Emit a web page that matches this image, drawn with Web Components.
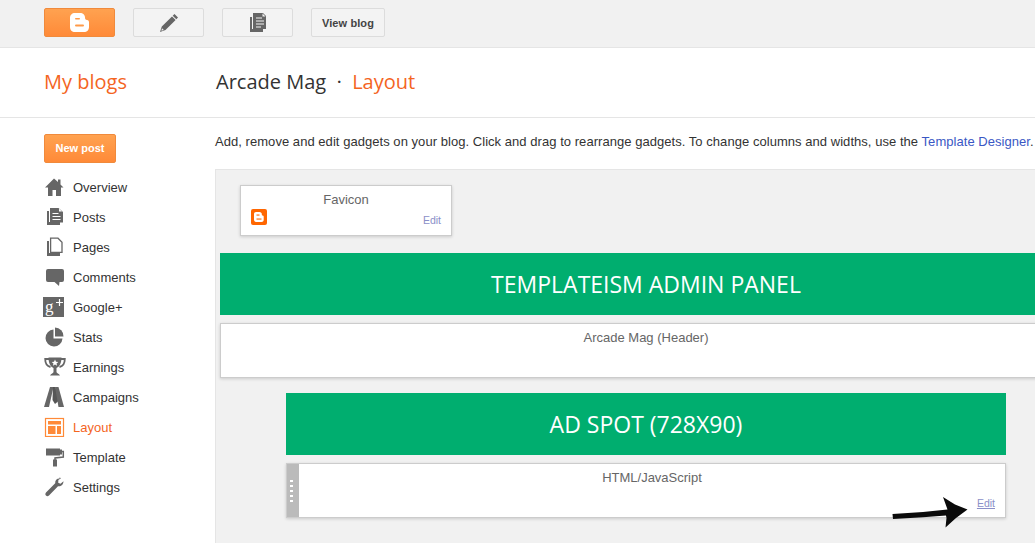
<!DOCTYPE html>
<html><head><meta charset="utf-8">
<style>
html,body{margin:0;padding:0;background:#fff}
body{width:1035px;height:543px;overflow:hidden;font-family:"Liberation Sans",Arial,sans-serif;color:#333}
</style></head>
<body>
<x-app></x-app>
<template id="t-app">
<style>
:host{display:block;width:1035px;height:543px;position:relative;overflow:hidden}
.body{display:flex}
main{flex:none;width:820px}
.hint{font-size:13px;line-height:15px;letter-spacing:.045px;color:#333;white-space:nowrap;padding-top:16px;height:20px;margin-bottom:15px}
.hint a{color:#3a57c4;text-decoration:none}
.panel{box-sizing:border-box;width:860px;height:400px;background:#f1f1f1;border:1px solid #e5e5e5;border-right:0;padding:15px 0 0 4px;overflow:hidden}
svg.arrow{position:absolute;left:890px;top:494px;width:80px;height:36px}
</style>
<x-topbar></x-topbar>
<x-pagehead></x-pagehead>
<div class="body">
<x-sidebar></x-sidebar>
<main>
<div class="hint">Add, remove and edit gadgets on your blog. Click and drag to rearrange gadgets. To change columns and widths, use the <a href="#">Template Designer</a>.</div>
<div class="panel">
<x-gadget title-text="Favicon" kind="favicon" style="margin-left:20px;width:212px;height:51px"></x-gadget>
<x-banner style="margin-top:17px;width:852px">TEMPLATEISM ADMIN PANEL</x-banner>
<x-gadget title-text="Arcade Mag (Header)" style="margin-top:8px;width:852px;height:55px"></x-gadget>
<x-banner style="margin-top:15px;margin-left:66px;width:720px">AD SPOT (728X90)</x-banner>
<x-gadget title-text="HTML/JavaScript" kind="drag" style="margin-top:8px;margin-left:66px;width:720px;height:55px"></x-gadget>
</div>
</main>
</div>
<svg class="arrow" viewBox="0 0 80 36"><path fill="#0a0a0a" d="M2.500 20 L3 25 L33 23.200 L56 21.500 L56.500 24 L55.500 33.500 L66 24 L77.500 15.500 L65 10.500 L53 3 L57.500 15.500 L33 18 Z"/></svg>
</template>

<template id="t-topbar">
<style>
:host{display:flex;box-sizing:border-box;height:48px;background:#f1f1f1;border-bottom:1px solid #e5e5e5;padding:8px 0 0 44px;gap:18px;align-items:flex-start}
.b{box-sizing:border-box;width:71px;height:29px;border:1px solid #dcdcdc;border-radius:2px;background:#f3f3f3;display:flex;align-items:center;justify-content:center}
.o{background:linear-gradient(#ffa250,#ff8a38);border-color:#f08a3c}
.v{width:74px;font:bold 11px "Liberation Sans",Arial,sans-serif;color:#444;letter-spacing:.1px}
</style>
<div class="b o"><svg width="19" height="19" viewBox="0 0 19 19"><path fill="#fff" d="M5 0h5c3 0 5 2 5 4.500 0 1.500.5 2.500 2 2.500 1.500 0 2 1 2 2.500V14c0 3-2 5-5 5H5c-3 0-5-2-5-5V5c0-3 2-5 5-5z"/><rect x="5" y="5" width="5" height="1.600" rx=".8" fill="#ff9a48"/><rect x="5" y="11.500" width="9" height="2" rx="1" fill="#ff9a48"/></svg></div>
<div class="b"><svg width="20" height="20" viewBox="0 0 20 20"><path fill="#666" d="M15.500 1 L19 4.500 L17.300 6.300 L13.700 2.800Z M13 3.500 L16.600 7 L6.500 17 L1 19 L2.800 13.500Z"/><path fill="#f3f3f3" d="M3 15.200l1.800 1.800-2.400.7z"/></svg></div>
<div class="b"><svg width="18" height="21" viewBox="0 0 18 21"><path fill="#666" d="M1 5h2v12h11v3H1z"/><path fill="#666" d="M4 1h10l3 3v13H4z"/><path stroke="#f3f3f3" stroke-width="1.200" d="M7 6h6M7 9h8M7 12h8M7 15h5"/><path fill="#f3f3f3" d="M13.500 1.500l3 3h-3z"/></svg></div>
<div class="b v">View blog</div>
</template>

<template id="t-pagehead">
<style>
:host{display:flex;box-sizing:border-box;height:70px;border-bottom:1px solid #e5e5e5;font:20px/68px "Open Sans",sans-serif;color:#333;white-space:nowrap}
.l{color:#f4651f;width:172px;margin-left:44px}
.o{color:#f4651f}
.d{margin:0 11px;font-weight:bold;font-size:14px}
</style>
<span class="l">My blogs</span><span>Arcade Mag</span><span class="d">·</span><span class="o">Layout</span>
</template>

<template id="t-sidebar">
<style>
:host{display:block;flex:none;width:215px;box-sizing:border-box;padding:16px 0 0 44px}
.np{box-sizing:border-box;width:72px;height:29px;background:linear-gradient(#ffa250,#ff8a38);border:1px solid #f08a3c;border-radius:2px;color:#fff;font:bold 11px/27px "Liberation Sans",Arial,sans-serif;text-align:center;margin-bottom:9px}
</style>
<div class="np">New post</div>
<x-navitem label="Overview"><svg viewBox="0 0 22 20" width="22" height="20"><path fill="#666" d="M10 1.500 L1 10.500 H4 V19 H8.500 V13 H12 V19 H17 V10.500 H19.500 L16.500 7.500 V2.500 H14 V5 Z"/></svg></x-navitem>
<x-navitem label="Posts"><svg viewBox="0 0 22 20" width="22" height="20"><path fill="#666" d="M3 4h2v11h11v3H3z"/><path fill="#666" d="M6 .5h8.500L19 4.500V15H6z" transform="translate(0 .5)"/><path stroke="#fff" stroke-width="1.200" d="M8.500 6.500h6M8.500 9.500h8M8.500 12.500h8"/><path fill="#fff" d="M15 1.500l3 3h-3z"/></svg></x-navitem>
<x-navitem label="Pages"><svg viewBox="0 0 22 20" width="22" height="20"><path fill="#666" d="M3 4h2v12h11v3H3z"/><path fill="#fff" stroke="#666" stroke-width="1.300" d="M6.600 1.200h7.400l4 4v10.200H6.600z"/></svg></x-navitem>
<x-navitem label="Comments"><svg viewBox="0 0 22 20" width="22" height="20"><path fill="#666" d="M4 2h14a2 2 0 0 1 2 2v9a2 2 0 0 1-2 2h-2.500l-.5 4-4.500-4H4a2 2 0 0 1-2-2V4a2 2 0 0 1 2-2z"/></svg></x-navitem>
<x-navitem label="Google+"><svg viewBox="0 0 22 22" width="22" height="22" style="margin:-1px 0 -1px -1px"><rect x="0" y="1" width="21" height="20" fill="#666"/><text x="2" y="15.500" font-family="Liberation Serif,serif" font-size="17" fill="#fff">g</text><path stroke="#fff" stroke-width="1.200" d="M13 6.500h7M16.500 3v7"/></svg></x-navitem>
<x-navitem label="Stats"><svg viewBox="0 0 22 20" width="22" height="20"><path fill="#666" d="M9.500 2.500a8.500 8.500 0 1 0 9 9h-9z"/><path fill="#666" d="M11 .5a8.500 8.500 0 0 1 8.500 9H11z"/></svg></x-navitem>
<x-navitem label="Earnings"><svg viewBox="0 0 22 22" width="22" height="22" style="margin:-1px 0"><path fill="none" stroke="#666" stroke-width="1.800" d="M5 3H1.200c0 4 1 7 5.300 8M17 3h3.800c0 4-1 7-5.300 8"/><path fill="#666" d="M4.500 1.500h13c0 5-1.500 9-5 10.500v4c0 1 2.500 1.500 3.500 3.500H6c1-2 3.500-2.500 3.500-3.500v-4C6 10.500 4.500 6.500 4.500 1.500z"/><path fill="#fff" d="M11 3.500l1 2.200 2.300.2-1.800 1.500.6 2.300-2.100-1.300-2.100 1.300.6-2.300L7.700 5.900 10 5.700z"/></svg></x-navitem>
<x-navitem label="Campaigns"><svg viewBox="0 0 22 22" width="22" height="22" style="margin:-1px 0 -1px -1px"><path fill="#666" d="M7 1h3.500L6 21H1z"/><path fill="#444" d="M10 1h2.500l3 14-3.500 3-2.500-4z" opacity=".9"/><path fill="#666" d="M12 1h3.500L21 21h-5.500z"/></svg></x-navitem>
<x-navitem label="Layout" active="1"><svg viewBox="0 0 22 20" width="22" height="20"><rect x="1.500" y="1.500" width="18" height="18" fill="#fff" stroke="#ff8a38" stroke-width="1.200"/><path fill="#ff8a38" d="M4 4h13v3.500H4zM4 9h7.500v8H4zM13 9h4v8h-4z"/></svg></x-navitem>
<x-navitem label="Template"><svg viewBox="0 0 22 20" width="22" height="20"><path fill="#666" d="M2 1.500h14v1h2v5h-2v1H2z"/><path fill="none" stroke="#666" stroke-width="1.500" d="M17.500 4.500h1.800v5.500l-8.300 1v2"/><rect x="9" y="12.500" width="4" height="7" fill="#666"/></svg></x-navitem>
<x-navitem label="Settings"><svg viewBox="0 0 22 20" width="22" height="20"><path fill="#666" d="M15.500 1.500c-2.800 0-4.500 2-4.300 4.800L2 15.500c-1 1.300-.7 2.300 0 3s1.700 1 3 0l9-9.300c2.800.5 5.500-1.500 5.500-5l-3 2.500-2.300-1 .2-2.700 2.600-1.700c-.5-.2-1-.8-1.500-.8z"/></svg></x-navitem>
</template>

<template id="t-navitem">
<style>
:host{display:flex;align-items:center;height:30px;font-size:13px;color:#333;white-space:nowrap}
:host([active]){color:#f4651f}
.i{width:29px;flex:none;display:flex;align-items:center;height:20px}
</style>
<span class="i"><slot></slot></span><span class="t"></span>
</template>

<template id="t-gadget">
<style>
:host{display:block;box-sizing:border-box;background:#fff;border:1px solid #ccc;box-shadow:0 1px 3px rgba(0,0,0,.16);position:relative;font-size:13px;color:#666}
.wrap{display:flex;height:100%}
.h{display:none;box-sizing:border-box;width:12px;padding-right:3px;flex:none;background:#bbb;flex-direction:column;align-items:center;justify-content:center;gap:3px}
.h i{display:block;width:3px;height:2px;background:#fff}
:host([kind=drag]) .h{display:flex}
.c{flex:1;min-width:0;display:flex;flex-direction:column;position:relative}
.t{text-align:center;line-height:14px;padding-top:7px}
.row{flex:1;display:flex;justify-content:space-between;align-items:flex-end;padding:0 10px 8px 10px;font-size:10.500px;line-height:12px}
a{color:#8b8fc8;text-decoration:none;display:none}
:host([kind=favicon]) a,:host([kind=drag]) a{display:block}
:host([kind=favicon]) a{margin-bottom:1px}
:host([kind=drag]) a{text-decoration:underline}
.f{display:none;margin-bottom:2px}
:host([kind=favicon]) .f{display:block}
.sp{flex:1}
</style>
<div class="wrap"><div class="h"><i></i><i></i><i></i><i></i><i></i></div>
<div class="c"><div class="t"></div><div class="row"><svg class="f" width="16" height="16" viewBox="0 0 16 16"><rect width="16" height="16" rx="2" fill="#f60"/><path fill="#fff" d="M5 3h3.500c1.500 0 2.300 1 2.300 2.200 0 .9.200 1.300 1 1.400.7.100.9.600.9 1.400V11c0 1.300-1 2-2.200 2H5c-1.200 0-2-1-2-2.200V5c0-1.200.8-2 2-2z"/><rect x="5.500" y="5.500" width="3" height="1.100" fill="#f60"/><rect x="5.500" y="9.500" width="5" height="1.100" fill="#f60"/></svg><span class="sp"></span><a href="#">Edit</a></div></div></div>
</template>

<template id="t-banner">
<style>
:host{display:block;height:62px;background:#00ae6f;color:#fff;font:23px/62px "Open Sans",sans-serif;text-align:center;white-space:nowrap}
</style>
<slot></slot>
</template>

<script>
function mk(name,id,init){
  customElements.define(name,class extends HTMLElement{
    constructor(){super();const s=this.attachShadow({mode:'open'});s.appendChild(document.getElementById(id).content.cloneNode(true));}
    connectedCallback(){if(init)init(this,this.shadowRoot);}
  });
}
mk('x-topbar','t-topbar');
mk('x-pagehead','t-pagehead');
mk('x-sidebar','t-sidebar');
mk('x-navitem','t-navitem',(h,s)=>{s.querySelector('.t').textContent=h.getAttribute('label');});
mk('x-gadget','t-gadget',(h,s)=>{s.querySelector('.t').textContent=h.getAttribute('title-text');});
mk('x-banner','t-banner');
mk('x-app','t-app');
</script>
</body></html>
